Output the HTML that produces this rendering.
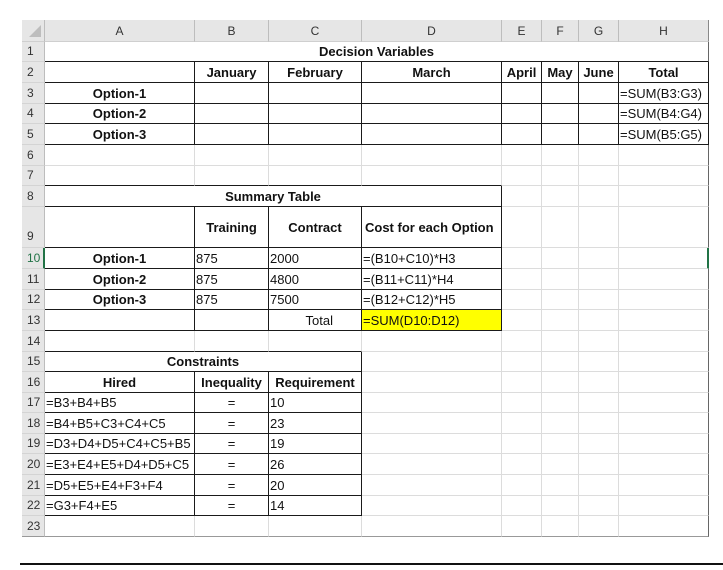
<!DOCTYPE html>
<html><head><meta charset="utf-8">
<style>
html,body{margin:0;padding:0;background:#fff;width:723px;height:570px;overflow:hidden;}
table{position:absolute;left:22px;top:20px;border-collapse:separate;border-spacing:0;table-layout:fixed;font-family:"Liberation Sans",sans-serif;font-size:13px;color:#111;}
td{padding:0 1px;border-right:1px solid #dcdcdc;border-bottom:1px solid #dcdcdc;white-space:nowrap;overflow:hidden;box-sizing:border-box;vertical-align:middle;line-height:15px;}
td.h{background:#e6e6e6;color:#333;text-align:center;border-right:1px solid #bdbdbd;border-bottom:1px solid #cfcfcf;font-size:12px;padding-top:2px;}
td.rh{background:#e6e6e6;color:#333;text-align:left;padding-left:5px;border-right:1px solid #bdbdbd;border-bottom:1px solid #d4d4d4;font-size:12px;}
.r{border-right:1px solid #1a1a1a!important;}
.b{border-bottom:1px solid #1a1a1a!important;}
.c{text-align:center;}
.bd{font-weight:bold;}
.e{border-right:1px solid #666;}
.y{background:#ffff00;}
.line{position:absolute;left:20px;top:563px;width:703px;height:2px;background:#111;}
</style></head><body>
<table>
<colgroup><col style="width:23px"><col style="width:150px"><col style="width:74px"><col style="width:93px"><col style="width:140px"><col style="width:40px"><col style="width:37px"><col style="width:40px"><col style="width:90px"></colgroup>
<tr style="height:22px"><td class="h" style="position:relative"><svg width="12" height="12" style="position:absolute;right:3px;bottom:4px"><polygon points="12,0 12,12 0,12" fill="#bdbdbd"/></svg></td><td class="h">A</td><td class="h">B</td><td class="h">C</td><td class="h">D</td><td class="h">E</td><td class="h">F</td><td class="h">G</td><td class="h" style="border-right:1px solid #888">H</td></tr>
<tr style="height:20px"><td class="rh">1</td><td colspan="8" class="b c bd e">Decision Variables</td></tr>
<tr style="height:21px"><td class="rh">2</td><td class="r b"></td><td class="r b c bd">January</td><td class="r b c bd">February</td><td class="r b c bd">March</td><td class="r b c bd">April</td><td class="r b c bd">May</td><td class="r b c bd">June</td><td class="r b c bd">Total</td></tr>
<tr style="height:21px"><td class="rh">3</td><td class="r b c bd">Option-1</td><td class="r b"></td><td class="r b"></td><td class="r b"></td><td class="r b"></td><td class="r b"></td><td class="r b"></td><td class="r b">=SUM(B3:G3)</td></tr>
<tr style="height:20px"><td class="rh">4</td><td class="r b c bd">Option-2</td><td class="r b"></td><td class="r b"></td><td class="r b"></td><td class="r b"></td><td class="r b"></td><td class="r b"></td><td class="r b">=SUM(B4:G4)</td></tr>
<tr style="height:21px"><td class="rh">5</td><td class="r b c bd">Option-3</td><td class="r b"></td><td class="r b"></td><td class="r b"></td><td class="r b"></td><td class="r b"></td><td class="r b"></td><td class="r b">=SUM(B5:G5)</td></tr>
<tr style="height:21px"><td class="rh">6</td><td></td><td></td><td></td><td></td><td></td><td></td><td></td><td class="e"></td></tr>
<tr style="height:20px"><td class="rh">7</td><td class="b"></td><td class="b"></td><td class="b"></td><td class="b"></td><td></td><td></td><td></td><td class="e"></td></tr>
<tr style="height:21px"><td class="rh">8</td><td colspan="4" class="r b c bd">Summary Table</td><td></td><td></td><td></td><td class="e"></td></tr>
<tr style="height:41px"><td class="rh" style="vertical-align:bottom;padding-bottom:3px">9</td><td class="r b"></td><td class="r b c bd">Training</td><td class="r b c bd">Contract</td><td class="r b bd" style="padding-left:3px">Cost for each Option</td><td></td><td></td><td></td><td class="e"></td></tr>
<tr style="height:21px"><td class="rh" style="color:#217346;border-right:2px solid #217346">10</td><td class="r b c bd">Option-1</td><td class="r b">875</td><td class="r b">2000</td><td class="r b">=(B10+C10)*H3</td><td></td><td></td><td></td><td style="border-right:2px solid #217346"></td></tr>
<tr style="height:21px"><td class="rh">11</td><td class="r b c bd">Option-2</td><td class="r b">875</td><td class="r b">4800</td><td class="r b">=(B11+C11)*H4</td><td></td><td></td><td></td><td class="e"></td></tr>
<tr style="height:20px"><td class="rh">12</td><td class="r b c bd">Option-3</td><td class="r b">875</td><td class="r b">7500</td><td class="r b">=(B12+C12)*H5</td><td></td><td></td><td></td><td class="e"></td></tr>
<tr style="height:21px"><td class="rh">13</td><td class="r b"></td><td class="r b"></td><td class="r b" style="text-align:right;padding-right:28px">Total</td><td class="r b y">=SUM(D10:D12)</td><td></td><td></td><td></td><td class="e"></td></tr>
<tr style="height:21px"><td class="rh">14</td><td class="b"></td><td class="b"></td><td class="b"></td><td></td><td></td><td></td><td></td><td class="e"></td></tr>
<tr style="height:20px"><td class="rh">15</td><td colspan="3" class="r b c bd">Constraints</td><td></td><td></td><td></td><td></td><td class="e"></td></tr>
<tr style="height:21px"><td class="rh">16</td><td class="r b c bd">Hired</td><td class="r b c bd">Inequality</td><td class="r b c bd">Requirement</td><td></td><td></td><td></td><td></td><td class="e"></td></tr>
<tr style="height:20px"><td class="rh">17</td><td class="r b">=B3+B4+B5</td><td class="r b c">=</td><td class="r b">10</td><td></td><td></td><td></td><td></td><td class="e"></td></tr>
<tr style="height:21px"><td class="rh">18</td><td class="r b">=B4+B5+C3+C4+C5</td><td class="r b c">=</td><td class="r b">23</td><td></td><td></td><td></td><td></td><td class="e"></td></tr>
<tr style="height:20px"><td class="rh">19</td><td class="r b">=D3+D4+D5+C4+C5+B5</td><td class="r b c">=</td><td class="r b">19</td><td></td><td></td><td></td><td></td><td class="e"></td></tr>
<tr style="height:21px"><td class="rh">20</td><td class="r b">=E3+E4+E5+D4+D5+C5</td><td class="r b c">=</td><td class="r b">26</td><td></td><td></td><td></td><td></td><td class="e"></td></tr>
<tr style="height:21px"><td class="rh">21</td><td class="r b">=D5+E5+E4+F3+F4</td><td class="r b c">=</td><td class="r b">20</td><td></td><td></td><td></td><td></td><td class="e"></td></tr>
<tr style="height:20px"><td class="rh">22</td><td class="r b">=G3+F4+E5</td><td class="r b c">=</td><td class="r b">14</td><td></td><td></td><td></td><td></td><td class="e"></td></tr>
<tr style="height:21px"><td class="rh" style="border-bottom:1px solid #999">23</td><td style="border-bottom:1px solid #999"></td><td style="border-bottom:1px solid #999"></td><td style="border-bottom:1px solid #999"></td><td style="border-bottom:1px solid #999"></td><td style="border-bottom:1px solid #999"></td><td style="border-bottom:1px solid #999"></td><td style="border-bottom:1px solid #999"></td><td class="e" style="border-bottom:1px solid #999"></td></tr>
</table>
<div class="line"></div>
</body></html>
